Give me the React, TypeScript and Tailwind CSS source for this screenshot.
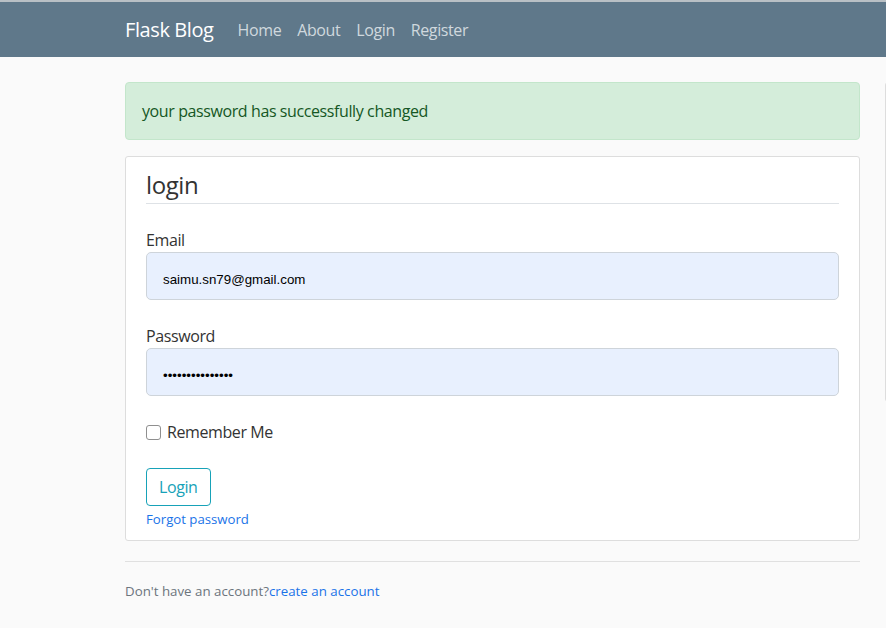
export default function App() {
  const font = { fontFamily: '"Open Sans", "Noto Sans", sans-serif' };
  const inputFont = { fontFamily: '"Liberation Sans", Arial, sans-serif' };
  return (
    <div className="min-h-screen w-[886px] overflow-hidden bg-[#fafafa] tracking-[-0.4px] text-[#212529]" style={font}>
      <div className="h-[2px] bg-[#b9c0c5]"></div>
      <header className="flex h-[55px] items-center bg-[#5f788a] pl-[125px]">
        <a className="mr-4 text-[20px] text-white">Flask Blog</a>
        <nav className="flex text-[16px] text-[#d0d8de]">
          <a className="px-2">Home</a>
          <a className="px-2">About</a>
          <a className="px-2">Login</a>
          <a className="px-2">Register</a>
        </nav>
      </header>

      <main className="flex gap-[25px] pl-[125px] pt-[25px]">
        <div className="w-[735px] shrink-0">
          <div className="mb-4 rounded border border-[#c3e6cb] bg-[#d4edda] px-4 py-4 text-[16px] leading-6 text-[#155724]">
            your password has successfully changed
          </div>

          <div className="mb-5 rounded-[3px] border border-[#dddddd] bg-white px-5 pt-[10px] pb-[9px]">
            <form>
              <div className="mb-6 border-b border-[#dee2e6] text-[24px] leading-9 text-[#333]">login</div>

              <div className="mb-6">
                <label className="block text-[16px] leading-6 text-[#333]">Email</label>
                <div className="flex h-12 items-center rounded-[5px] border border-[#ced4da] bg-[#e8f0fe] px-4 pt-2 text-[13.33px] tracking-normal text-black" style={inputFont}>
                  saimu.sn79@gmail.com
                </div>
              </div>

              <div className="mb-6">
                <label className="block text-[16px] leading-6 text-[#333]">Password</label>
                <div className="flex h-12 items-center rounded-[5px] border border-[#ced4da] bg-[#e8f0fe] px-4 pt-2 text-[13.33px] tracking-normal text-black" style={inputFont}>
                  •••••••••••••••
                </div>
              </div>

              <div className="mb-6 flex h-6 items-center">
                <span className="mr-[6px] h-[15px] w-[15px] rounded-[3px] border border-[#8f8f8f] bg-white"></span>
                <span className="text-[16px] text-[#333]">Remember Me</span>
              </div>

              <button type="button" className="h-[38px] rounded-[4px] border border-[#17a2b8] px-3 text-[16px] text-[#17a2b8]">
                Login
              </button>
              <div className="pt-px text-[13.2px] leading-6 tracking-normal text-[#1a73e8]">
                <a>Forgot password</a>
              </div>
            </form>
          </div>

          <div className="border-t border-[#e0e0e0] pt-[19px] text-[13.3px] leading-5 tracking-normal text-[#6c757d]">
            Don't have an account?<a className="text-[#1a73e8]">create an account</a>
          </div>
        </div>

        <div className="h-[320px] w-[300px] shrink-0 rounded-[3px] border border-[#dddddd] bg-[#fafafa]"></div>
      </main>
    </div>
  );
}
